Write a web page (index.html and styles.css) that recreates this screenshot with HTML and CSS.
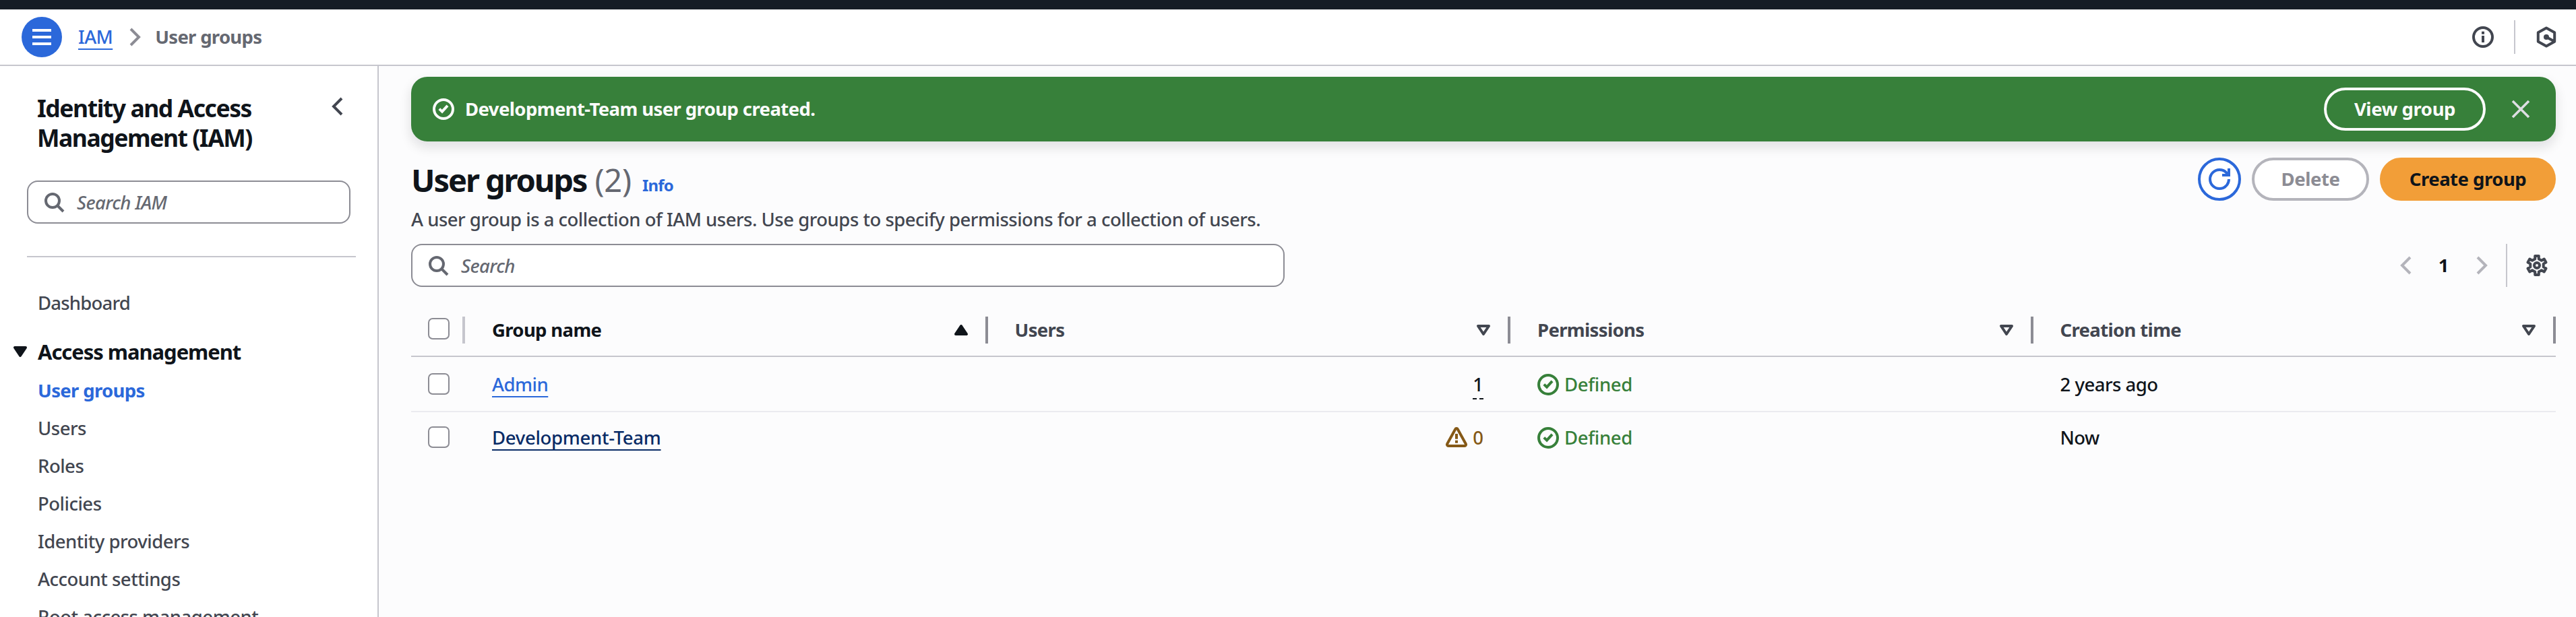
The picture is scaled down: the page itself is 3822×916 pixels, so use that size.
FILE: index.html
```html
<!DOCTYPE html>
<html lang="en">
<head>
<meta charset="utf-8">
<title>User groups | IAM</title>
<link rel="stylesheet" href="styles.css">
</head>
<body>
<svg class="sprite" aria-hidden="true">
  <symbol id="search" viewBox="0 0 16 16"><circle cx="7" cy="7" r="5"/><path d="m15 15-4.5-4.5"/></symbol>
  <symbol id="left" viewBox="0 0 16 16"><path d="M11 2 5 8l6 6"/></symbol>
  <symbol id="right" viewBox="0 0 16 16"><path d="m5 2 6 6-6 6"/></symbol>
  <symbol id="check" viewBox="0 0 16 16"><circle cx="8" cy="8" r="7"/><path d="m4.9 7.8 2.1 2 4-4.4"/></symbol>
  <symbol id="caret" viewBox="0 0 16 16"><path d="M4 5h8l-4 6z" stroke-linejoin="round"/></symbol>
</svg>
<div class="topbar"></div>
<header class="header">
  <button class="menu" aria-label="Menu"><span></span><span></span><span></span></button>
  <a class="link crumb" href="#">IAM</a>
  <svg class="icon crumb-sep"><use href="#right"/></svg>
  <span class="crumb-current">User groups</span>
  <div class="tools">
    <svg class="icon" viewBox="0 0 16 16"><circle cx="8" cy="8" r="7"/><path d="M8 3.9v2M8 7v5"/></svg>
    <span class="tools-line"></span>
    <svg class="icon" viewBox="0 0 16 16"><path d="m8 1.2 6.1 3.4v6.8L8 14.8l-6.1-3.4V4.6zM8 8l6 3.3" stroke-linejoin="round"/><circle class="solid" cx="8" cy="8" r="2"/></svg>
  </div>
</header>
<div class="layout">
  <nav class="sidebar">
    <div class="side-head">
      <h2>Identity and Access<br>Management (IAM)</h2>
      <svg class="icon"><use href="#left"/></svg>
    </div>
    <div class="search side-search"><svg class="icon"><use href="#search"/></svg><span>Search IAM</span></div>
    <hr>
    <a class="nav dash">Dashboard</a>
    <div class="section"><svg class="icon filled"><use href="#caret"/></svg><span>Access management</span></div>
    <div class="nav-list">
      <a class="nav active">User groups</a>
      <a class="nav">Users</a>
      <a class="nav">Roles</a>
      <a class="nav">Policies</a>
      <a class="nav">Identity providers</a>
      <a class="nav">Account settings</a>
      <a class="nav">Root access management</a>
    </div>
  </nav>
  <main class="main">
    <div class="flash">
      <svg class="icon"><use href="#check"/></svg>
      <span class="flash-text">Development-Team user group created.</span>
      <button class="btn btn-flash">View group</button>
      <svg class="icon close" viewBox="0 0 16 16"><path d="m2 2 12 12M14 2 2 14"/></svg>
    </div>
    <div class="title-row">
      <h1>User groups <span class="count">(2)</span></h1><a class="info">Info</a>
      <div class="actions">
        <button class="btn btn-refresh" aria-label="Refresh"><svg class="icon" viewBox="0 0 16 16"><path d="M15 8c0 3.87-3.13 7-7 7s-7-3.13-7-7 3.13-7 7-7c2.79 0 5.2 1.63 6.33 4M10 5h5V0"/></svg></button>
        <button class="btn btn-delete">Delete</button>
        <button class="btn btn-create">Create group</button>
      </div>
    </div>
    <p class="desc">A user group is a collection of IAM users. Use groups to specify permissions for a collection of users.</p>
    <div class="filter-row">
      <div class="search"><svg class="icon"><use href="#search"/></svg><span>Search</span></div>
      <div class="pager">
        <svg class="icon muted"><use href="#left"/></svg>
        <b>1</b>
        <svg class="icon muted"><use href="#right"/></svg>
        <span class="pager-line"></span>
        <svg class="icon" viewBox="0 0 16 16"><path stroke-linejoin="round" d="M6.6 3.2V1h2.8v2.2l2.06 1.19 1.9-1.1 1.4 2.42-1.9 1.1v2.38l1.9 1.1-1.4 2.42-1.9-1.1L9.4 12.8V15H6.6v-2.2l-2.06-1.19-1.9 1.1-1.4-2.42 1.9-1.1V6.81l-1.9-1.1 1.4-2.42 1.9 1.1z"/><circle cx="8" cy="8" r="2"/></svg>
      </div>
    </div>
    <div class="table">
      <div class="row head">
        <div class="pick"><i class="box"></i></div>
        <div class="cell sorted"><span>Group name</span><svg class="icon filled"><use href="#caret"/></svg></div>
        <div class="cell"><span>Users</span><svg class="icon"><use href="#caret"/></svg></div>
        <div class="cell"><span>Permissions</span><svg class="icon"><use href="#caret"/></svg></div>
        <div class="cell"><span>Creation time</span><svg class="icon"><use href="#caret"/></svg></div>
      </div>
      <div class="row first">
        <div class="pick"><i class="box"></i></div>
        <div class="cell"><a class="link" href="#">Admin</a></div>
        <div class="cell num"><span class="tip">1</span></div>
        <div class="cell ok"><svg class="icon"><use href="#check"/></svg><span>Defined</span></div>
        <div class="cell"><span>2 years ago</span></div>
      </div>
      <div class="row last">
        <div class="pick"><i class="box"></i></div>
        <div class="cell"><a class="link hovered" href="#">Development-Team</a></div>
        <div class="cell num warn"><svg class="icon" viewBox="0 0 16 16"><path stroke-linejoin="round" d="M7.1 1.6a1 1 0 0 1 1.8 0l6 10.9a1 1 0 0 1-.9 1.5H2a1 1 0 0 1-.9-1.5zM8 5v3.9M8 9.9v2"/></svg><span>0</span></div>
        <div class="cell ok"><svg class="icon"><use href="#check"/></svg><span>Defined</span></div>
        <div class="cell"><span>Now</span></div>
      </div>
    </div>
  </main>
</div>
</body>
</html>
```
FILE: styles.css
```css
* { box-sizing: border-box; }
body {
  margin: 0;
  height: 916px;
  overflow: hidden;
  display: flex;
  flex-direction: column;
  background: #fff;
  color: #0f141a;
  font: 500 27.5px/40px "Noto Sans", "Open Sans", sans-serif;
  letter-spacing: -0.5px;
}
h1, h2, p { margin: 0; }
button { font: inherit; letter-spacing: inherit; color: inherit; }
.sprite { position: absolute; width: 0; height: 0; }
.icon { width: 32px; height: 32px; flex: none; fill: none; stroke: currentColor; stroke-width: 2; overflow: visible; }
.icon.filled { fill: currentColor; }
.solid { fill: currentColor; stroke: none; }
.link {
  color: #2b68da;
  text-decoration: underline 2px;
  text-underline-offset: 7px;
  text-decoration-skip-ink: none;
}
.link.hovered { color: #092b66; letter-spacing: -0.3px; }

.topbar { height: 14px; flex: none; background: #161d26; }
.header {
  height: 84px;
  flex: none;
  display: flex;
  align-items: center;
  padding: 0 28px 0 32px;
  border-bottom: 2px solid #c6c6cd;
}
.menu {
  width: 60px;
  height: 60px;
  margin-right: 24px;
  padding: 0;
  border: 0;
  border-radius: 50%;
  background: #2b68da;
  display: flex;
  flex-direction: column;
  align-items: center;
  justify-content: center;
  gap: 6px;
}
.menu span { width: 28px; height: 4px; background: #fff; }
.crumb { letter-spacing: -0.6px; }
.crumb-sep { margin: 0 14px 0 17px; color: #8c8c94; }
.crumb-current { color: #656871; font-weight: 700; letter-spacing: -0.7px; }
.tools { margin-left: auto; display: flex; align-items: center; gap: 30px; color: #424650; }
.tools-line { width: 2px; height: 50px; background: #c6c6cd; }

.layout { flex: 1; min-height: 0; display: flex; }
.sidebar { width: 562px; flex: none; overflow: hidden; border-right: 2px solid #c6c6cd; color: #424650; }
.side-head { display: flex; justify-content: space-between; padding: 40px 43px 0 55px; }
.side-head h2 { font-size: 35.5px; line-height: 44px; font-weight: 700; letter-spacing: -1.45px; color: #0f141a; }
.side-head .icon { margin-top: 4px; }
.search {
  display: flex;
  align-items: center;
  gap: 18px;
  height: 64px;
  padding-left: 22px;
  border: 2px solid #8c8c94;
  border-radius: 16px;
  background: #fff;
  color: #656871;
  font-style: italic;
  letter-spacing: -0.6px;
}
.search span { margin-top: 2px; }
.side-search { width: 480px; margin: 42px 0 0 40px; }
.sidebar hr { width: 488px; height: 2px; margin: 48px 0 48px 40px; border: 0; background: #c6c6cd; }
.nav { display: block; padding-left: 56px; white-space: nowrap; }
.dash { letter-spacing: -0.8px; }
.section {
  display: flex;
  align-items: center;
  gap: 10px;
  margin-top: 32px;
  padding-left: 14px;
  color: #0f141a;
  font-size: 31px;
  font-weight: 700;
  letter-spacing: -1.05px;
}
.nav-list { display: grid; gap: 16px; margin-top: 18px; }
.active { color: #2b68da; font-weight: 700; letter-spacing: -0.65px; }

.main { flex: 1; min-width: 0; padding: 16px 30px 0 48px; background: #fcfcfd; }
.flash {
  display: flex;
  align-items: center;
  height: 96px;
  padding: 0 36px 0 32px;
  border-radius: 24px;
  background: #37803a;
  color: #fbfbfb;
  font-weight: 700;
  box-shadow: 0 8px 16px 2px rgba(0, 7, 22, 0.1);
}
.flash-text { margin: 0 auto 0 16px; letter-spacing: -0.6px; }
.close { color: #dedee3; stroke-width: 1.8; margin-left: 36px; }
.btn {
  height: 64px;
  padding: 0;
  border: 4px solid;
  border-radius: 32px;
  background: transparent;
  font-weight: 700;
  letter-spacing: -0.4px;
}
.btn-flash { width: 240px; }
.title-row { display: flex; align-items: flex-start; height: 64px; margin-top: 24px; white-space: nowrap; }
h1 { font-size: 47px; line-height: 60px; font-weight: 700; letter-spacing: -2.1px; margin-top: 3px; }
.count { margin-left: 2px; color: #656871; font-weight: 400; letter-spacing: -0.2px; }
.info { margin: 21px 0 0 16px; color: #2b68da; font-size: 24px; font-weight: 700; letter-spacing: -0.8px; }
.actions { display: flex; gap: 16px; margin-left: auto; }
.btn-refresh { width: 64px; display: grid; place-items: center; background: #fff; color: #2b68da; }
.btn-delete { width: 174px; border-color: #b4b4bb; background: #fff; color: #8c8c94; }
.btn-create { width: 261px; border-color: #f29e38; background: #f29e38; color: #0f141a; letter-spacing: -0.5px; }
.desc { margin: 8px 0 16px; color: #424650; letter-spacing: -0.5px; }
.filter-row { display: flex; justify-content: space-between; }
.filter-row .search { width: 1296px; }
.pager { display: flex; align-items: center; padding-right: 12px; color: #424650; }
.pager b { margin: 0 33px 0 32px; color: #0f141a; }
.pager-line { width: 2px; height: 64px; margin: 0 28px 0 20px; background: #c6c6cd; }
.muted { color: #b4b4bb; }

.table { margin-top: 24px; }
.row { display: grid; grid-template-columns: 80px repeat(4, 1fr); height: 82px; border-bottom: 2px solid #ebebf0; }
.row.last { height: 74px; border: 0; }
.pick { display: flex; align-items: center; padding-left: 25px; }
.box { width: 32px; height: 32px; border: 2px solid #8c8c94; border-radius: 7px; background: #fff; }
.cell { display: flex; align-items: center; gap: 8px; padding: 2px 40px 0; }
.num { justify-content: flex-end; letter-spacing: 0; }
.tip { border-bottom: 2px dashed #0f141a; margin-bottom: -2px; }
.ok { color: #37803a; letter-spacing: -0.3px; }
.warn { color: #855917; }
.head { height: 80px; border-bottom-color: #c6c6cd; color: #424650; font-weight: 700; letter-spacing: -0.65px; }
.head .pick, .head .cell { height: 40px; align-self: center; margin-top: 2px; }
.head .pick { border-right: 4px solid #c6c6cd; }
.head .box { margin-bottom: 4px; }
.head .cell { justify-content: space-between; padding: 0 20px 0 40px; border-right: 4px solid #8c8c94; }
.head .sorted { color: #0f141a; }
.sorted .icon { transform: rotate(180deg); }
```
